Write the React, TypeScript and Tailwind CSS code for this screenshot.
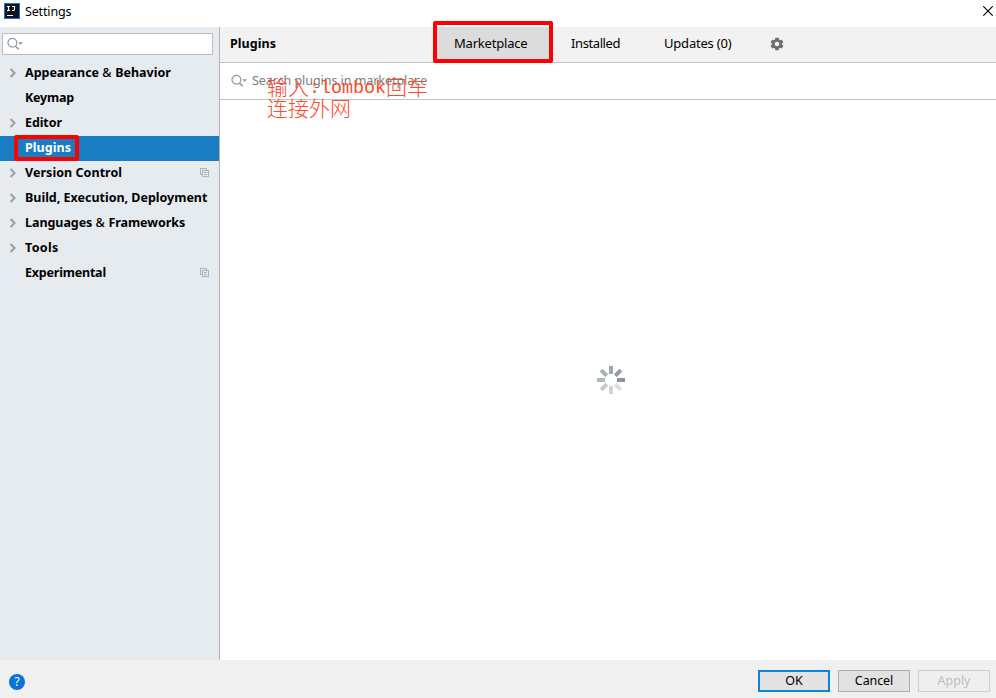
import React from "react";

const ui = "font-['Noto_Sans','Open_Sans','Noto_Sans_CJK_SC',sans-serif]";

function SearchIcon() {
  return (
    <svg width="17" height="14" viewBox="0 0 17 14" fill="none" className="shrink-0">
      <circle cx="5.4" cy="5.8" r="4.4" stroke="#8f999f" strokeWidth="1.2" />
      <path d="M8.6 9.2l3 3" stroke="#8f999f" strokeWidth="1.6" />
      <path d="M11.4 5.2h4.600l-2.300 2.800z" fill="#8f999f" />
    </svg>
  );
}

function Chevron() {
  return (
    <svg width="8" height="10" viewBox="0 0 8 10" fill="none" className="ml-px">
      <path d="M1.6 1l4 4-4 4" stroke="#999b9d" strokeWidth="1.9" />
    </svg>
  );
}

function CopyIcon() {
  return (
    <svg width="10" height="10" viewBox="0 0 10 10" fill="none" stroke="#a9b5be" strokeWidth="1" shapeRendering="crispEdges">
      <path d="M2 6.5H.5v-6h6V2" />
      <path d="M2.5 2.500h6v6h-6zM4 4.500h3M4 6.500h3" />
    </svg>
  );
}

function Spinner() {
  const bars = [
    { a: 0, c: "#9ba8ad" },
    { a: 45, c: "#939ca2" },
    { a: 90, c: "#8a949c" },
    { a: 135, c: "#dcdee0" },
    { a: 180, c: "#d0d5d8" },
    { a: 225, c: "#c5cacd" },
    { a: 270, c: "#b3babe" },
    { a: 315, c: "#a9b1b6" },
  ];
  return (
    <svg width="28" height="28" viewBox="-14 -14 28 28">
      {bars.map((b) => (
        <rect key={b.a} x="-2" y="-14" width="4" height="8" fill={b.c} transform={`rotate(${b.a})`} />
      ))}
    </svg>
  );
}

function Gear() {
  return (
    <svg width="14" height="14" viewBox="0 0 14 14" fill="#6e6e6e">
      <path
        fillRule="evenodd"
        d="M5.4.8h3.2l.4 1.8 1.1.7 1.8-.6 1.5 2.7L12 6.5v1l1.4 1.2-1.5 2.7-1.8-.6-1.1.7-.4 1.7H5.4L5 11.500l-1.100-.7-1.800.6L.6 8.700 2 7.500v-1L.6 5.400l1.500-2.700 1.800.6L5 2.600zM7 4.700a2.300 2.300 0 1 0 0 4.600 2.300 2.300 0 0 0 0-4.600z"
      />
    </svg>
  );
}

type Item = { label: string; arrow?: boolean; copy?: boolean; selected?: boolean; spacing: string };

const items: Item[] = [
  { label: "Appearance & Behavior", arrow: true, spacing: "tracking-[-0.02px]" },
  { label: "Keymap", spacing: "tracking-[-0.2px]" },
  { label: "Editor", arrow: true, spacing: "tracking-[-0.1px]" },
  { label: "Plugins", selected: true, spacing: "tracking-[0.05px]" },
  { label: "Version Control", arrow: true, copy: true, spacing: "tracking-[0.05px]" },
  { label: "Build, Execution, Deployment", arrow: true, spacing: "tracking-[-0.01px]" },
  { label: "Languages & Frameworks", arrow: true, spacing: "tracking-[-0.05px]" },
  { label: "Tools", arrow: true, spacing: "tracking-[0.35px]" },
  { label: "Experimental", copy: true, spacing: "tracking-[-0.2px]" },
];

function Label({ text }: { text: string }) {
  const [before, after] = text.split("&");
  if (after === undefined) return <>{text}</>;
  return (
    <>
      {before}
      <span className="font-medium tracking-[0.5px]">&amp;</span>
      {after}
    </>
  );
}

function TreeRow({ item }: { item: Item }) {
  return (
    <div className="relative h-[25px]">
      <div
        className={`flex h-[25px] items-center pl-2 pr-[9px] ${
          item.selected ? "translate-y-px bg-[#1a7dc4] text-white" : "text-black"
        }`}
      >
        <span className="w-[17px] shrink-0">{item.arrow && <Chevron />}</span>
        <span className={`whitespace-nowrap text-[12.5px] font-bold ${item.selected ? "leading-[23px] pb-[2px]" : "leading-[25px]"} ${item.spacing}`}>
          <Label text={item.label} />
        </span>
        {item.copy && (
          <span className="ml-auto">
            <CopyIcon />
          </span>
        )}
      </div>
      {item.selected && <span className="absolute left-[14px] top-0 h-[26px] w-[65px] rounded-[2px] border-4 border-[#fe0000]" />}
    </div>
  );
}

export default function App() {
  return (
    <div className={`relative flex h-[698px] w-[996px] flex-col overflow-hidden bg-white text-[13px] text-black ${ui}`}>
      <header className="flex h-[27px] shrink-0 items-start">
        <svg width="16" height="16" viewBox="0 0 16 16" className="ml-1 mt-[3px]">
          <rect x=".5" y=".5" width="15" height="15" fill="#111318" stroke="#1b6fe0" />
          <path d="M3 3.500h3M4.500 3.500v4M3 7.500h3M8 3.500h3M10.500 3v3.200q0 1.300-1.300 1.300H8M3 12.500h6" stroke="#fff" strokeWidth="1.100" fill="none" />
        </svg>
        <span className="ml-[5px] mt-[3px] text-[12.5px] leading-[18px] tracking-[-0.15px]">Settings</span>
        <svg width="10" height="10" viewBox="0 0 10 10" className="ml-auto mr-[3px] mt-[6px]">
          <path d="M.3.3l9.400 9.400M9.700.3L.3 9.700" stroke="#000" strokeWidth="1.100" />
        </svg>
      </header>

      <div className="flex h-[633px] shrink-0">
        <aside className="w-[220px] shrink-0 border-r border-[#b0b3b6] bg-[#e6ebef]">
          <div className="ml-[2px] mt-[6px] flex h-[22px] w-[211px] items-center border border-[#b9bdc0] bg-white pl-1">
            <SearchIcon />
          </div>
          <nav className="mt-[5px] pb-px">
            {items.map((item) => (
              <TreeRow key={item.label} item={item} />
            ))}
          </nav>
        </aside>

        <main className="flex min-w-0 flex-1 flex-col">
          <div className="flex h-9 shrink-0 border-b border-[#c3c3c3] bg-[#f2f2f2] leading-[33px]">
            <h1 className="w-[214px] pl-[10px] text-[12.5px] font-bold tracking-[0.05px]">Plugins</h1>
            <div className="relative w-[117px] bg-[#dcdcdc] pl-5 tracking-[-0.2px]">
              Marketplace
              <span className="absolute -left-px -top-[6px] h-[42px] w-[120px] rounded-[2px] border-4 border-[#fe0000]" />
            </div>
            <div className="w-[93px] pl-5 tracking-[-0.4px]">Installed</div>
            <div className="w-[113px] pl-5 tracking-[-0.2px]">Updates (0)</div>
            <div className="ml-[13px] mt-[10px]">
              <Gear />
            </div>
          </div>
          <div className="relative flex h-[37px] shrink-0 items-center border-b border-[#c3c3c3] pl-[11px]">
            <SearchIcon />
            <span className="ml-1 text-[12.5px] tracking-[-0.05px] text-[#7c7c7c]">Search plugins in marketplace</span>
            <div className="absolute left-[47px] top-[13px] whitespace-nowrap font-['Noto_Sans_CJK_SC',sans-serif] text-[21px] font-light leading-[21px] text-[#ff4a2c]">
              <div className="flex">
                <span>输入</span>
                <span className="relative top-[2px] font-['Liberation_Mono',monospace] text-[18.500px] tracking-[-0.1px]">:lombok</span>
                <span>回车</span>
              </div>
              <div>连接外网</div>
            </div>
          </div>
          <div className="flex flex-1 justify-center pt-[266px]">
            <span className="mr-[-6px]">
              <Spinner />
            </span>
          </div>
        </main>
      </div>

      <footer className="flex h-[38px] shrink-0 items-start bg-[#f0f0f0] pr-[6px] pt-[10px] text-[12.500px]">
        <div className="ml-[9px] mt-1 flex size-4 items-center justify-center rounded-full bg-[#0874d9] text-[12px] leading-4 text-white">?</div>
        <div className="ml-auto flex gap-2 text-center">
          <button className="h-[22px] w-[72px] border-2 border-[#0a84dc] bg-[#e2e2e2] pb-px leading-[16px]">OK</button>
          <button className="h-[22px] w-[72px] border border-[#adadad] bg-[#e2e2e2] pb-px leading-[18px] tracking-[-0.1px]">Cancel</button>
          <button className="h-[22px] w-[72px] border border-[#cdcdcd] bg-[#efefef] pb-px leading-[18px] text-[#bcbcbc]">Apply</button>
        </div>
      </footer>
    </div>
  );
}
